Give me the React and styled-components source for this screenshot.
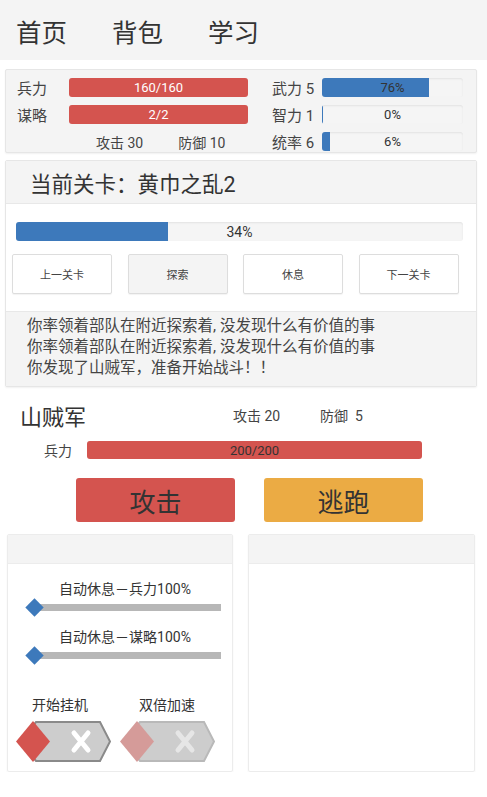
import React from "react";
import styled, { createGlobalStyle } from "styled-components";

const Global = createGlobalStyle`
  body {
    margin: 0;
    background: #fff;
    font-family: Roboto, "Noto Sans CJK SC", sans-serif;
    color: #333;
  }
`;

const RED = "#d4544f";
const BLUE = "#3d79bb";
const ORANGE = "#ebab44";

const Nav = styled.div`
  height: 60px;
  background: #f4f4f4;
  display: flex;
  align-items: center;
  padding-left: 16px;
  gap: 45px;
  margin-bottom: 9px;
`;
const NavItem = styled.div`
  font-size: 25.5px;
  color: #333;
  line-height: 1;
  padding-top: 7px;
`;

const Panel = styled.div`
  margin: ${(p) => p.$mt || 0}px 10px 0 5px;
  border: 1px solid #e6e6e6;
  box-shadow: 0 1px 2px rgba(0, 0, 0, 0.06);
  border-radius: 2px;
  background: ${(p) => p.$bg || "#fff"};
  overflow: hidden;
`;

const StatsGrid = styled.div`
  display: grid;
  grid-template-columns: 52px 179px 74px 141px;
  grid-template-rows: 19px 19px 19px;
  row-gap: 8px;
  padding: 8px 0 1px 11px;
  align-items: center;
`;
const StatLabel = styled.div`
  font-size: 15px;
  color: #444;
  padding-left: ${(p) => (p.$right ? "24px" : "0")};
`;
const Bar = styled.div`
  display: grid;
  height: ${(p) => p.$h || 19}px;
  background: #f5f5f5;
  border-radius: 3px;
  box-shadow: inset 0 1px 2px rgba(0, 0, 0, 0.08);
  overflow: hidden;
`;
const Fill = styled.div`
  grid-area: 1 / 1;
  background: ${(p) => p.$color};
  height: 100%;
`;
const BarText = styled.div`
  grid-area: 1 / 1;
  display: flex;
  align-items: center;
  justify-content: center;
  font-size: ${(p) => p.$size || 13}px;
  color: ${(p) => p.$color || "#333"};
`;
const PowerRow = styled.div`
  grid-column: 1 / 3;
  display: flex;
  gap: 35px;
  padding-left: 79px;
  font-size: 14px;
  color: #444;
`;

const Progress = ({ pct, color, text, textColor, h, size }) => (
  <Bar $h={h}>
    <Fill $color={color} style={{ width: `${pct}%` }} />
    <BarText $color={textColor} $size={size}>{text}</BarText>
  </Bar>
);

const LevelHeader = styled.div`
  height: 42px;
  background: #f4f4f4;
  border-bottom: 1px solid #e8e8e8;
  display: flex;
  align-items: center;
  padding-left: 24px;
  font-size: 21.5px;
  color: #333;
`;
const LevelBody = styled.div`
  background: #fff;
  padding: 18px 13px 17px 10px;
`;
const Buttons = styled.div`
  display: flex;
  gap: 15.5px;
  margin: 13px 0 0 -4px;
`;
const SmallButton = styled.div`
  width: 100px;
  height: 40px;
  box-sizing: border-box;
  border: 1px solid #ddd;
  border-radius: 2px;
  background: ${(p) => (p.$active ? "#f4f4f4" : "#fff")};
  box-shadow: 0 1px 1px rgba(0, 0, 0, 0.05);
  display: flex;
  align-items: center;
  justify-content: center;
  font-size: 11px;
  color: #444;
`;
const Log = styled.div`
  background: #f4f4f4;
  border-top: 1px solid #e8e8e8;
  padding: 4px 0 7px 21px;
  font-size: 15.5px;
  line-height: 21px;
  color: #444;
  height: 63px;
`;

const Enemy = styled.div`
  padding: 12px 0 0 20px;
`;
const EnemyHead = styled.div`
  display: flex;
  align-items: center;
`;
const EnemyName = styled.div`
  font-size: 22px;
  width: 213px;
  color: #333;
`;
const EnemyStat = styled.div`
  font-size: 14px;
  color: #444;
  width: ${(p) => p.$w}px;
`;
const EnemyHp = styled.div`
  display: flex;
  align-items: center;
  margin-top: 9px;
  padding-left: 24px;
`;
const HpLabel = styled.div`
  font-size: 14px;
  color: #444;
  width: 43px;
`;
const HpBar = styled.div`
  width: 335px;
`;
const ActionRow = styled.div`
  display: flex;
  gap: 29px;
  margin: 18px 0 0 56px;
`;
const ActionButton = styled.div`
  width: 159px;
  height: 44px;
  border-radius: 3px;
  background: ${(p) => p.$color};
  display: flex;
  align-items: center;
  justify-content: center;
  font-size: 26px;
  color: #333;
`;

const Bottom = styled.div`
  display: flex;
  gap: 15px;
  margin: 12px 0 0 7px;
`;
const Card = styled.div`
  width: ${(p) => p.$w}px;
  height: 238px;
  box-sizing: border-box;
  border: 1px solid #ececec;
  box-shadow: 0 1px 2px rgba(0, 0, 0, 0.06);
  border-radius: 2px;
  overflow: hidden;
`;
const CardHead = styled.div`
  height: 28px;
  background: #f4f4f4;
  border-bottom: 1px solid #ececec;
`;
const CardBody = styled.div`
  padding: 14px 11px 0 19px;
`;
const SliderLabel = styled.div`
  font-size: 14px;
  color: #333;
  text-align: center;
  padding-left: 2px;
  margin-top: ${(p) => p.$mt || 0}px;
`;
const Track = styled.div`
  position: relative;
  height: 7px;
  background: #b7b7b7;
  margin: 6px 0 0 4px;
`;
const Thumb = styled.div`
  position: absolute;
  left: -3px;
  top: -3px;
  width: 13px;
  height: 13px;
  background: ${BLUE};
  transform: rotate(45deg);
`;
const Toggles = styled.div`
  display: grid;
  grid-template-columns: 104px 94px;
  margin: 35px 0 0 -11px;
`;
const ToggleCol = styled.div`
  display: flex;
  flex-direction: column;
  align-items: flex-start;
`;
const ToggleLabel = styled.div`
  font-size: 14px;
  color: #333;
  padding-left: ${(p) => p.$pl}px;
  margin-bottom: 6px;
`;

const Toggle = ({ faded }) => (
  <svg width="96" height="43" viewBox="0 0 96 43">
    <polygon
      points="4,21.5 20,2 84,2 94,21.5 84,41 20,41"
      fill="#cdcdcd"
      stroke={faded ? "#b9b9b9" : "#8a8a8a"}
      strokeWidth="2"
    />
    <polygon points="17,1 34,21.5 17,42 0,21.5" fill={faded ? "#d59b99" : RED} />
    <g stroke={faded ? "#e6e6e6" : "#fff"} strokeWidth="5" strokeLinecap="round">
      <line x1="58" y1="13" x2="72" y2="30" />
      <line x1="72" y1="13" x2="58" y2="30" />
    </g>
  </svg>
);

export default function App() {
  return (
    <>
      <Global />
      <Nav>
        <NavItem>首页</NavItem>
        <NavItem>背包</NavItem>
        <NavItem>学习</NavItem>
      </Nav>

      <Panel $bg="#f4f4f4">
        <StatsGrid>
          <StatLabel>兵力</StatLabel>
          <Progress pct={100} color={RED} text="160/160" textColor="#fff" />
          <StatLabel $right>武力 5</StatLabel>
          <Progress pct={76} color={BLUE} text="76%" />
          <StatLabel>谋略</StatLabel>
          <Progress pct={100} color={RED} text="2/2" textColor="#fff" />
          <StatLabel $right>智力 1</StatLabel>
          <Progress pct={0.7} color={BLUE} text="0%" />
          <PowerRow>
            <span>攻击 30</span>
            <span>防御 10</span>
          </PowerRow>
          <StatLabel $right>统率 6</StatLabel>
          <Progress pct={6} color={BLUE} text="6%" />
        </StatsGrid>
      </Panel>

      <Panel $mt={7}>
        <LevelHeader>当前关卡：黄巾之乱2</LevelHeader>
        <LevelBody>
          <Progress pct={34} color={BLUE} text="34%" size={14} />
          <Buttons>
            <SmallButton>上一关卡</SmallButton>
            <SmallButton $active>探索</SmallButton>
            <SmallButton>休息</SmallButton>
            <SmallButton>下一关卡</SmallButton>
          </Buttons>
        </LevelBody>
        <Log>
          <div>你率领着部队在附近探索着, 没发现什么有价值的事</div>
          <div>你率领着部队在附近探索着, 没发现什么有价值的事</div>
          <div>你发现了山贼军，准备开始战斗！！</div>
        </Log>
      </Panel>

      <Enemy>
        <EnemyHead>
          <EnemyName>山贼军</EnemyName>
          <EnemyStat $w={87}>攻击 20</EnemyStat>
          <EnemyStat $w={60}>防御&nbsp;&nbsp;5</EnemyStat>
        </EnemyHead>
        <EnemyHp>
          <HpLabel>兵力</HpLabel>
          <HpBar>
            <Progress pct={100} color={RED} text="200/200" h={18} />
          </HpBar>
        </EnemyHp>
        <ActionRow>
          <ActionButton $color={RED}>攻击</ActionButton>
          <ActionButton $color={ORANGE}>逃跑</ActionButton>
        </ActionRow>
      </Enemy>

      <Bottom>
        <Card $w={226}>
          <CardHead />
          <CardBody>
            <SliderLabel>自动休息－兵力100%</SliderLabel>
            <Track>
              <Thumb />
            </Track>
            <SliderLabel $mt={15}>自动休息－谋略100%</SliderLabel>
            <Track>
              <Thumb />
            </Track>
            <Toggles>
              <ToggleCol>
                <ToggleLabel $pl={16}>开始挂机</ToggleLabel>
                <Toggle />
              </ToggleCol>
              <ToggleCol>
                <ToggleLabel $pl={19}>双倍加速</ToggleLabel>
                <Toggle faded />
              </ToggleCol>
            </Toggles>
          </CardBody>
        </Card>
        <Card $w={227}>
          <CardHead />
        </Card>
      </Bottom>
    </>
  );
}
